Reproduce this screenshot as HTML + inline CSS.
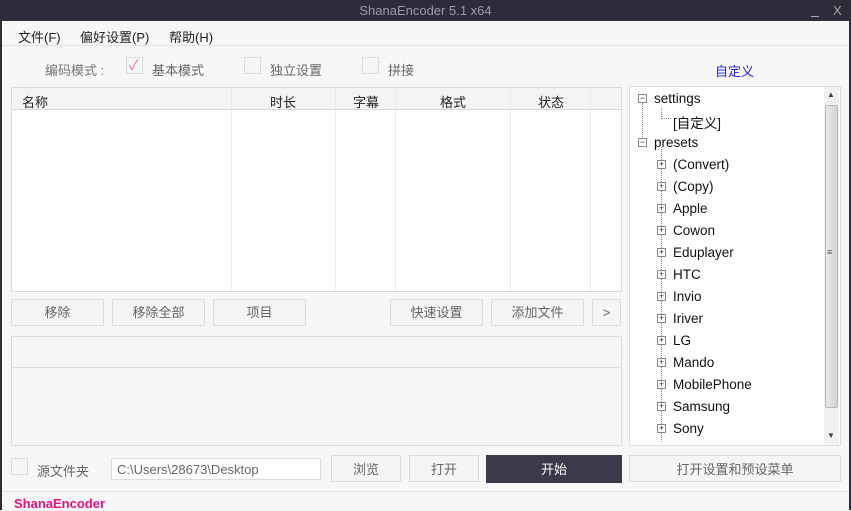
<!DOCTYPE html><html><head><meta charset="utf-8"><style>
*{margin:0;padding:0;box-sizing:border-box}
body{width:851px;height:510px;overflow:hidden;background:#f7f7f7;font-family:"Liberation Sans","Noto Sans CJK SC",sans-serif;font-size:13px;color:#222;position:relative}
.a{position:absolute}
.btn{position:absolute;border:1px solid #dcdcdc;background:#f5f5f5;color:#666;text-align:center;font-size:13px;line-height:26px}
.cb{position:absolute;width:17px;height:17px;border:1px solid #dcdcdc;background:#f7f7f7}
.t{position:absolute;font-size:13.5px;color:#111;white-space:nowrap}
.pm{position:absolute;width:9px;height:9px;border:1px solid #888;background:#fff;font-size:9px;line-height:7px;text-align:center;color:#333}
</style></head><body>
<div class="a" style="left:0;top:0;width:851px;height:21px;background:#2d2d3a"></div>
<div class="a" style="left:0;top:3px;width:851px;text-align:center;color:#9c9ca8;font-size:13px">ShanaEncoder 5.1 x64</div>
<div class="a" style="left:811px;top:16px;width:8px;height:1px;background:#aaa"></div>
<div class="a" style="left:833px;top:3px;color:#aaa;font-size:13px">X</div>
<div class="a" style="left:0;top:0;width:2px;height:510px;background:#2d2d3a"></div>
<div class="a" style="left:849px;top:0;width:2px;height:510px;background:#2d2d3a"></div>
<div class="a" style="left:2px;top:45px;width:847px;height:1px;background:#e2e2e2"></div>
<div class="a" style="left:18px;top:27px;font-size:13px">文件(F)</div>
<div class="a" style="left:80px;top:27px;font-size:13px">偏好设置(P)</div>
<div class="a" style="left:169px;top:27px;font-size:13px">帮助(H)</div>
<div class="a" style="left:45px;top:60px;color:#777">编码模式 :</div>
<div class="cb" style="left:126px;top:57px"></div><div class="a" style="left:129px;top:55px;color:#f06aa8;font-size:14px">✓</div>
<div class="a" style="left:152px;top:60px;color:#666">基本模式</div>
<div class="cb" style="left:244px;top:57px"></div><div class="a" style="left:270px;top:60px;color:#666">独立设置</div>
<div class="cb" style="left:362px;top:57px"></div><div class="a" style="left:388px;top:60px;color:#666">拼接</div>
<div class="a" style="left:715px;top:61px;color:#2222ee">自定义</div>
<div class="a" style="left:11px;top:87px;width:611px;height:205px;border:1px solid #dcdcdc;background:#fff"></div>
<div class="a" style="left:12px;top:88px;width:609px;height:22px;background:#f4f4f4;border-bottom:1px solid #d8d8d8"></div>
<div class="a" style="left:231px;top:88px;width:1px;height:203px;background:#e4ecf6"></div>
<div class="a" style="left:335px;top:88px;width:1px;height:203px;background:#e4ecf6"></div>
<div class="a" style="left:395px;top:88px;width:1px;height:203px;background:#e4ecf6"></div>
<div class="a" style="left:510px;top:88px;width:1px;height:203px;background:#e4ecf6"></div>
<div class="a" style="left:590px;top:88px;width:1px;height:203px;background:#e4ecf6"></div>
<div class="a" style="left:22px;top:92px">名称</div>
<div class="a" style="left:270px;top:92px">时长</div>
<div class="a" style="left:353px;top:92px">字幕</div>
<div class="a" style="left:440px;top:92px">格式</div>
<div class="a" style="left:538px;top:92px">状态</div>
<div class="btn" style="left:11px;top:299px;width:93px;height:27px">移除</div>
<div class="btn" style="left:112px;top:299px;width:93px;height:27px">移除全部</div>
<div class="btn" style="left:213px;top:299px;width:93px;height:27px">项目</div>
<div class="btn" style="left:390px;top:299px;width:93px;height:27px">快速设置</div>
<div class="btn" style="left:491px;top:299px;width:93px;height:27px">添加文件</div>
<div class="btn" style="left:592px;top:299px;width:29px;height:27px">&gt;</div>
<div class="a" style="left:11px;top:336px;width:611px;height:110px;border:1px solid #dcdcdc"></div>
<div class="a" style="left:12px;top:367px;width:609px;height:1px;background:#dcdcdc"></div>
<div class="a" style="left:629px;top:86px;width:212px;height:360px;border:1px solid #dcdcdc;background:#fff"></div>
<div class="a" style="left:824px;top:87px;width:15px;height:358px;background:#f0f0f0"></div>
<div class="a" style="left:825px;top:105px;width:13px;height:303px;background:linear-gradient(90deg,#e8e8e8,#d4d4d4);border:1px solid #b8b8b8;border-radius:2px"></div>
<div class="a" style="left:827px;top:247px;font-size:9px;color:#555">≡</div>
<div class="a" style="left:827px;top:90px;font-size:8px;color:#444">▲</div>
<div class="a" style="left:827px;top:431px;font-size:8px;color:#444">▼</div>
<div class="a" style="left:642px;top:103px;height:40px;border-left:1px dotted #888"></div>
<div class="a" style="left:661px;top:147px;height:295px;border-left:1px dotted #888"></div>
<div class="a" style="left:661px;top:108px;width:10px;height:11px;border-left:1px dotted #888;border-bottom:1px dotted #888"></div>
<div class="pm" style="left:638px;top:94px">−</div><div class="t" style="left:654px;top:91px">settings</div>
<div class="t" style="left:673px;top:112px">[自定义]</div>
<div class="pm" style="left:638px;top:138px">−</div><div class="t" style="left:654px;top:135px">presets</div>
<div class="pm" style="left:657px;top:160px">+</div><div class="t" style="left:673px;top:157px">(Convert)</div>
<div class="pm" style="left:657px;top:182px">+</div><div class="t" style="left:673px;top:179px">(Copy)</div>
<div class="pm" style="left:657px;top:204px">+</div><div class="t" style="left:673px;top:201px">Apple</div>
<div class="pm" style="left:657px;top:226px">+</div><div class="t" style="left:673px;top:223px">Cowon</div>
<div class="pm" style="left:657px;top:248px">+</div><div class="t" style="left:673px;top:245px">Eduplayer</div>
<div class="pm" style="left:657px;top:270px">+</div><div class="t" style="left:673px;top:267px">HTC</div>
<div class="pm" style="left:657px;top:292px">+</div><div class="t" style="left:673px;top:289px">Invio</div>
<div class="pm" style="left:657px;top:314px">+</div><div class="t" style="left:673px;top:311px">Iriver</div>
<div class="pm" style="left:657px;top:336px">+</div><div class="t" style="left:673px;top:333px">LG</div>
<div class="pm" style="left:657px;top:358px">+</div><div class="t" style="left:673px;top:355px">Mando</div>
<div class="pm" style="left:657px;top:380px">+</div><div class="t" style="left:673px;top:377px">MobilePhone</div>
<div class="pm" style="left:657px;top:402px">+</div><div class="t" style="left:673px;top:399px">Samsung</div>
<div class="pm" style="left:657px;top:424px">+</div><div class="t" style="left:673px;top:421px">Sony</div>
<div class="cb" style="left:11px;top:458px"></div>
<div class="a" style="left:37px;top:461px;color:#666">源文件夹</div>
<div class="a" style="left:111px;top:458px;width:210px;height:22px;border:1px solid #dcdcdc;background:#fff;color:#666;padding-left:5px;line-height:21px">C:\Users\28673\Desktop</div>
<div class="btn" style="left:331px;top:455px;width:70px;height:27px;line-height:27px">浏览</div>
<div class="btn" style="left:409px;top:455px;width:70px;height:27px;line-height:27px">打开</div>
<div class="btn" style="left:486px;top:455px;width:136px;height:28px;line-height:27px;background:#3a3a4a;border-color:#3a3a4a;color:#fff">开始</div>
<div class="btn" style="left:629px;top:455px;width:212px;height:27px;line-height:27px">打开设置和预设菜单</div>
<div class="a" style="left:2px;top:491px;width:847px;height:1px;background:#e2e2e2"></div>
<div class="a" style="left:14px;top:496px;color:#e8107c;font-weight:bold;font-size:13px">ShanaEncoder</div>
</body></html>
